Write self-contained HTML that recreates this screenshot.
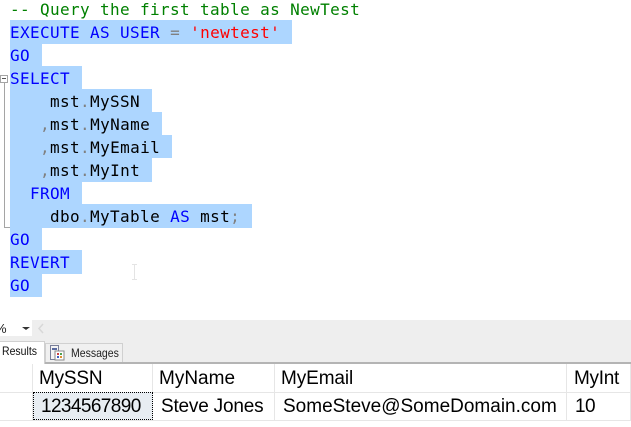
<!DOCTYPE html>
<html><head><meta charset="utf-8">
<style>
html,body{margin:0;padding:0;background:#fff;width:631px;height:427px;overflow:hidden}
.a{position:absolute}
.s{position:absolute;left:10px;background:#add6ff}
.l{position:absolute;white-space:pre;font-family:"DejaVu Sans Mono","Liberation Mono",monospace;font-size:16px;letter-spacing:.37px;line-height:23px;height:23px;left:10px;color:#000}
.k{color:#0000ff}.g{color:#808080}.r{color:#ff0000}.c{color:#008000}
.t{position:absolute;white-space:pre;font-family:"Liberation Sans",sans-serif;font-size:19px;line-height:28px;color:#000}
.v{position:absolute;width:1px;background:#e6e6e6}
.h{position:absolute;height:1px;background:#e6e6e6}
.n{font:12px/17px 'Liberation Sans',sans-serif;transform:scaleX(.875);transform-origin:0 0;white-space:pre}
</style></head><body>
<div class="s" style="top:20px;width:282px;height:24px"></div>
<div class="s" style="top:44px;width:32px;height:22px"></div>
<div class="s" style="top:66px;width:72px;height:23px"></div>
<div class="s" style="top:89px;width:142px;height:23px"></div>
<div class="s" style="top:112px;width:152px;height:23px"></div>
<div class="s" style="top:135px;width:162px;height:23px"></div>
<div class="s" style="top:158px;width:142px;height:24px"></div>
<div class="s" style="top:182px;width:72px;height:22px"></div>
<div class="s" style="top:204px;width:242px;height:24px"></div>
<div class="s" style="top:228px;width:32px;height:22px"></div>
<div class="s" style="top:250px;width:72px;height:24px"></div>
<div class="s" style="top:274px;width:32px;height:23px"></div>

<div class="l c" style="top:-2px">-- Query the first table as NewTest</div>
<div class="l" style="top:21px"><span class="k">EXECUTE AS USER</span> <span class="g">=</span> <span class="r">'newtest'</span></div>
<div class="l k" style="top:44px">GO</div>
<div class="l k" style="top:67px">SELECT</div>
<div class="l" style="top:90px">    mst<span class="g">.</span>MySSN</div>
<div class="l" style="top:113px">   <span class="g">,</span>mst<span class="g">.</span>MyName</div>
<div class="l" style="top:136px">   <span class="g">,</span>mst<span class="g">.</span>MyEmail</div>
<div class="l" style="top:159px">   <span class="g">,</span>mst<span class="g">.</span>MyInt</div>
<div class="l k" style="top:182px">  FROM</div>
<div class="l" style="top:205px">    dbo<span class="g">.</span>MyTable <span class="k">AS</span> mst<span class="g">;</span></div>
<div class="l k" style="top:228px">GO</div>
<div class="l k" style="top:251px">REVERT</div>
<div class="l k" style="top:274px">GO</div>

<!-- outline -->
<div class="a" style="left:0;top:75px;width:6px;height:6px;border:1px solid #a5a5a5;background:#fff"></div>
<div class="a" style="left:2px;top:78px;width:4px;height:1px;background:#555"></div>
<div class="a" style="left:4px;top:83px;width:1px;height:144px;background:#a5a5a5"></div>
<div class="a" style="left:4px;top:227px;width:6px;height:1px;background:#a5a5a5"></div>
<!-- I-beam -->
<div class="a" style="left:134px;top:264px;width:1px;height:15px;background:#e4e4e4"></div>
<div class="a" style="left:132px;top:264px;width:5px;height:1px;background:#e4e4e4"></div>
<div class="a" style="left:132px;top:279px;width:5px;height:1px;background:#e4e4e4"></div>

<!-- toolbar band -->
<div class="a" style="left:0;top:320px;width:631px;height:43px;background:#eeeeee"></div>
<div class="a" style="left:0;top:320px;width:32px;height:16px;background:#fff"></div>
<div class="a" style="left:-5px;top:320px;font:13px/17px 'Liberation Sans',sans-serif;color:#222">%</div>
<div class="a" style="left:22px;top:327px;width:0;height:0;border-left:4px solid transparent;border-right:4px solid transparent;border-top:3px solid #333"></div>
<svg class="a" style="left:37px;top:323px" width="8" height="11"><path d="M6 1L2 5.5L6 10" fill="none" stroke="#d8d8d8" stroke-width="1.5"/></svg>

<!-- tabs -->
<div class="a" style="left:45px;top:343px;width:78px;height:20px;background:#f0f0f0;border:1px solid #d0d0d0;border-bottom:0;box-sizing:border-box"></div>
<svg class="a" style="left:50px;top:345px" width="15" height="16">
<rect x="0.5" y="0.5" width="8" height="14" fill="#f4f4f4" stroke="#7a7f99"/>
<rect x="2" y="3" width="5" height="2" fill="#5a6aa0"/>
<rect x="5" y="6" width="9" height="9" fill="#fff" stroke="#8a8a8a"/>
<rect x="7" y="8" width="2" height="2" fill="#d04040"/><rect x="10" y="8" width="2" height="2" fill="#50a050"/>
<rect x="7" y="11" width="2" height="2" fill="#4060c0"/><rect x="10" y="11" width="2" height="2" fill="#e09030"/>
</svg>
<div class="a n" style="left:71px;top:345px;color:#222">Messages</div>
<div class="a" style="left:0;top:362px;width:631px;height:2px;background:#b4b4b4"></div>
<div class="a" style="left:0;top:341px;width:45px;height:23px;background:#fff;border-top:1px solid #d0d0d0;border-right:1px solid #d0d0d0;box-sizing:border-box"></div>
<div class="a n" style="left:2px;top:343px;color:#111">Results</div>

<!-- grid -->
<div class="h" style="left:0;top:392px;width:630px"></div>
<div class="h" style="left:0;top:420px;width:630px"></div>
<div class="v" style="left:32px;top:364px;height:57px"></div>
<div class="v" style="left:152px;top:364px;height:57px"></div>
<div class="v" style="left:274px;top:364px;height:57px"></div>
<div class="v" style="left:566px;top:364px;height:57px"></div>
<div class="v" style="left:630px;top:364px;height:57px"></div>
<div class="a" style="left:33px;top:392px;width:120px;height:28px;background:#e8edf2;border:1px dotted #000;box-sizing:border-box"></div>
<div class="t" style="left:39px;top:365px;letter-spacing:-.2px">MySSN</div>
<div class="t" style="left:159px;top:365px">MyName</div>
<div class="t" style="left:281px;top:365px;letter-spacing:-.1px">MyEmail</div>
<div class="t" style="left:574px;top:365px;letter-spacing:-.3px">MyInt</div>
<div class="t" style="left:41px;top:393px;letter-spacing:-.6px">1234567890</div>
<div class="t" style="left:161px;top:393px;letter-spacing:-.2px">Steve Jones</div>
<div class="t" style="left:283px;top:393px">SomeSteve@SomeDomain.com</div>
<div class="t" style="left:575px;top:393px;letter-spacing:-.6px">10</div>
</body></html>
